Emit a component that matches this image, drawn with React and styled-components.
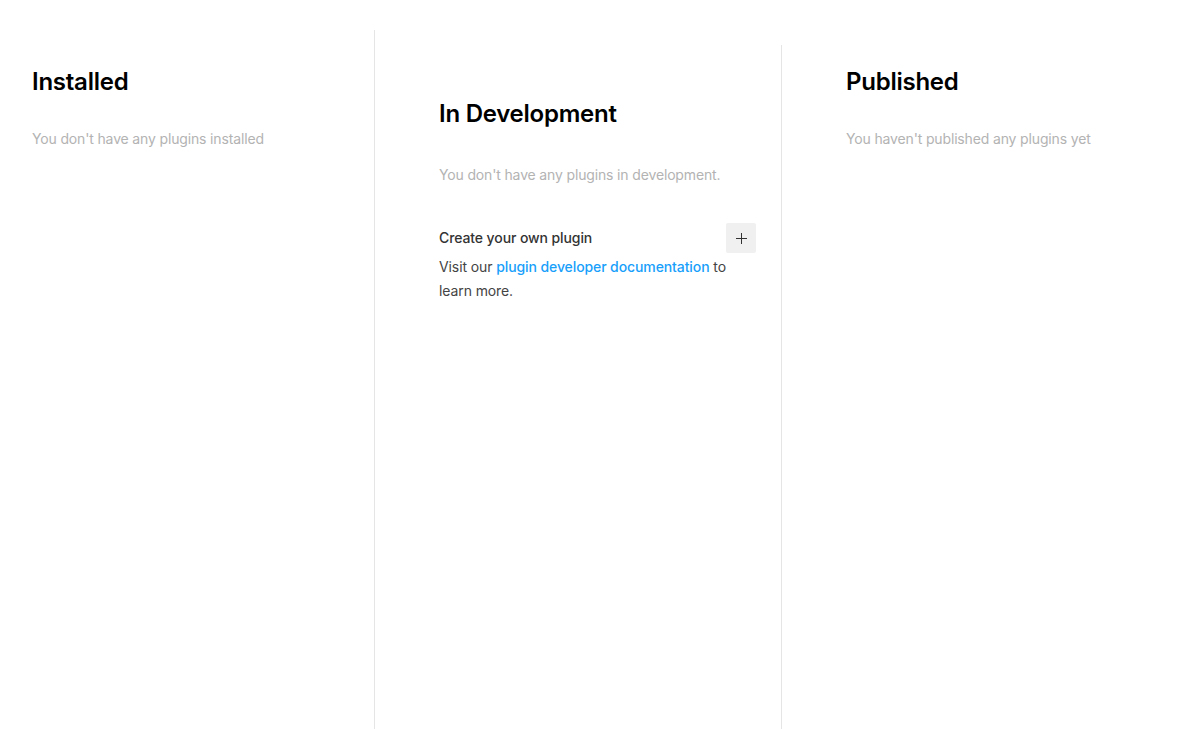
import styled, { createGlobalStyle } from "styled-components"

const GlobalStyle = createGlobalStyle`
    body {
        margin: 0;
        background: #fff;
        font-family: Inter, "Noto Sans", sans-serif;
        -webkit-font-smoothing: antialiased;
    }
`;

const App = () => {
    return (
        <>
            <GlobalStyle />
            <Page>
                <Column width="375px" top="30px" pad="36px" left="32px" bordered>
                    <Title>Installed</Title>
                    <Empty gap="29px">You don't have any plugins installed</Empty>
                </Column>
                <Column width="407px" top="45px" pad="53px" left="64px" right="25px" bordered>
                    <Title>In Development</Title>
                    <Empty gap="33px">You don't have any plugins in development.</Empty>
                    <CreateRow>
                        <CreateTitle>Create your own plugin</CreateTitle>
                        <AddButton aria-label="Create plugin">
                            <svg width="11" height="11" viewBox="0 0 11 11">
                                <path d="M5.5 0v11M0 5.5h11" stroke="#333" strokeWidth="1" fill="none" />
                            </svg>
                        </AddButton>
                    </CreateRow>
                    <Body>
                        Visit our <DocLink href="#">plugin developer documentation</DocLink> to learn more.
                    </Body>
                </Column>
                <Column top="30px" pad="36px" left="64px" grow>
                    <Title>Published</Title>
                    <Empty gap="29px">You haven't published any plugins yet</Empty>
                </Column>
            </Page>
        </>
    )
}

const Page = styled.div`
    display: flex;
    height: 100vh;
    min-height: 729px;
    box-sizing: border-box;
`;

const Column = styled.section`
    box-sizing: border-box;
    width: ${(p) => p.width || "auto"};
    flex: ${(p) => (p.grow ? "1" : "none")};
    margin-top: ${(p) => p.top};
    padding: ${(p) => p.pad} ${(p) => p.right || "32px"} 0 ${(p) => p.left};
    border-right: ${(p) => (p.bordered ? "1px solid #e5e5e5" : "none")};
`;

const Title = styled.h2`
    margin: 0;
    font-size: 24px;
    line-height: 32px;
    font-weight: 600;
    color: #000;
    letter-spacing: -0.25px;
`;

const Empty = styled.p`
    margin: ${(p) => p.gap} 0 0;
    font-size: 14px;
    line-height: 24px;
    color: #b3b3b3;
    letter-spacing: -0.15px;
`;

const CreateRow = styled.div`
    display: flex;
    align-items: center;
    justify-content: space-between;
    margin-top: 36px;
`;

const CreateTitle = styled.h3`
    margin: 0;
    font-size: 14px;
    font-weight: 500;
    color: #333;
    line-height: 24px;
    letter-spacing: -0.1px;
`;

const AddButton = styled.button`
    width: 30px;
    height: 30px;
    border: none;
    border-radius: 2px;
    background: #f0f0f0;
    display: flex;
    align-items: center;
    justify-content: center;
    padding: 0;
    cursor: pointer;
`;

const Body = styled.p`
    margin: 2px 0 0;
    font-size: 14px;
    line-height: 24px;
    color: #444;
    letter-spacing: -0.1px;
    max-width: 300px;
`;

const DocLink = styled.a`
    color: #18a0fb;
    font-weight: 500;
    text-decoration: none;
`;

export default App
